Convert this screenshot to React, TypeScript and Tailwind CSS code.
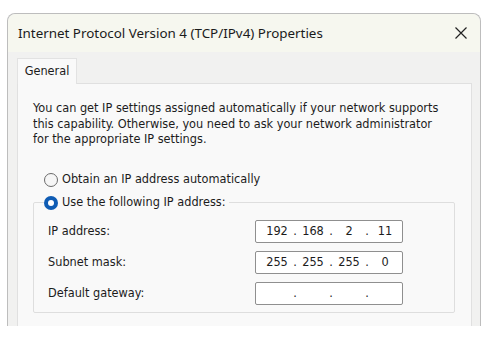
import React from "react";

const body = { fontFamily: '"DejaVu Sans Condensed", "DejaVu Sans", sans-serif' };
const title = { fontFamily: '"Noto Sans", "Open Sans", sans-serif' };

function Radio({ checked }: { checked?: boolean }) {
  if (checked) {
    return (
      <span className="flex h-[14px] w-[14px] shrink-0 items-center justify-center rounded-full bg-[#0f5cb4]">
        <span className="h-[6px] w-[6px] rounded-full bg-white" />
      </span>
    );
  }
  return <span className="h-[14px] w-[14px] shrink-0 rounded-full border border-[#6b6b6b] bg-[#f6f6f6]" />;
}

function IpBox({ parts }: { parts: string[] }) {
  return (
    <div className="flex h-[23px] w-[148px] items-center rounded-[2px] border border-[#8f8f8f] bg-white pl-[8px] text-[#1c1c1c]">
      {parts.map((p, i) => (
        <React.Fragment key={i}>
          <span className="w-[26px] text-center">{p}</span>
          {i < 3 && <span className="w-[10px] text-center">.</span>}
        </React.Fragment>
      ))}
    </div>
  );
}

const rows = [
  { label: "IP address:", parts: ["192", "168", "2", "11"] },
  { label: "Subnet mask:", parts: ["255", "255", "255", "0"] },
  { label: "Default gateway:", parts: ["", "", "", ""] },
];

export default function App() {
  return (
    <div className="h-[340px] w-[497px] overflow-hidden bg-white pl-[7px] pt-[13px]">
      <div className="flex h-[313px] w-[474px] flex-col rounded-t-[8px] border border-b-0 border-[#bdbdbd] bg-[#f1f1f0]">
        {/* title bar */}
        <div className="flex h-[38px] shrink-0 items-center justify-between rounded-t-[8px] bg-[#f6f7ef] pl-[10px] pr-[13px]">
          <span style={title} className="text-[13.4px] text-[#1b1b1b]">
            Internet Protocol Version 4 (TCP/IPv4) Properties
          </span>
          <svg width="12" height="12" viewBox="0 0 12 12" className="text-[#222]">
            <path d="M0.5 0.5 L11.5 11.5 M11.5 0.5 L0.5 11.5" stroke="currentColor" strokeWidth="1.2" />
          </svg>
        </div>

        <div style={body} className="flex flex-1 flex-col pl-[9px] pr-[8px] pt-[6px] text-[12.6px] text-[#1c1c1c]">
          {/* tabs */}
          <div className="flex">
            <div className="relative -mb-px flex h-[26px] w-[60px] items-center justify-center border border-b-0 border-[#e2e2e2] bg-[#f9f9f9]">
              General
            </div>
          </div>

          <div className="flex-1 border border-b-0 border-[#e0e0e0] bg-[#f9f9f9] pl-[15px] pr-[10px] pt-[16px]">
            <p className="leading-[15.5px]">
              You can get IP settings assigned automatically if your network supports
              <br />
              this capability. Otherwise, you need to ask your network administrator
              <br />
              for the appropriate IP settings.
            </p>

            <div className="ml-[11px] mt-[25px] flex h-[16px] items-center gap-[4px]">
              <Radio />
              <span>Obtain an IP address automatically</span>
            </div>

            <fieldset className="mr-[6px] mt-[7px] rounded-[2px] border border-[#dedede] pb-[7px] pl-[14px] pr-[50px]">
              <legend className="-ml-[4px] flex h-[16px] items-center gap-[4px] pr-[3px]">
                <Radio checked />
                <span>Use the following IP address:</span>
              </legend>
              <div className="mt-[9px] flex flex-col gap-[8px]">
                {rows.map((r) => (
                  <div key={r.label} className="flex items-center">
                    <span className="w-[207px]">{r.label}</span>
                    <IpBox parts={r.parts} />
                  </div>
                ))}
              </div>
            </fieldset>
          </div>
        </div>
      </div>
    </div>
  );
}
